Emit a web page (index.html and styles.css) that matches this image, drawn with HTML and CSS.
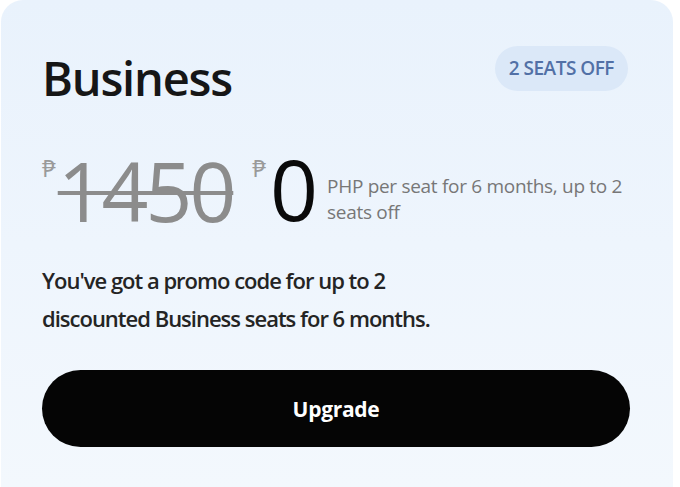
FILE: index.html
```html
<!DOCTYPE html>
<html>
<head>
<meta charset="utf-8">
<link rel="stylesheet" href="styles.css">
</head>
<body>
<div class="card">
  <div class="head">
    <h1 class="title">Business</h1>
    <span class="badge">2 SEATS OFF</span>
  </div>
  <div class="price">
    <span class="cur">₱</span><span class="old">1450</span>
    <span class="cur cur-new">₱</span><span class="new">0</span>
    <span class="note">PHP per seat for 6 months, up to 2 seats off</span>
  </div>
  <p class="desc">You've got a promo code for up to 2 discounted Business seats for 6 months.</p>
  <button class="btn">Upgrade</button>
</div>
</body>
</html>
```
FILE: styles.css
```css
html, body {
  margin: 0;
  padding: 0;
  background: #ffffff;
  height: 100%;
  overflow: hidden;
}
body {
  font-family: "Open Sans", "Noto Sans", sans-serif;
}
.card {
  box-sizing: border-box;
  width: 672px;
  height: 487px;
  margin-left: 1px;
  border-radius: 22px 22px 0 0;
  background: linear-gradient(180deg, #e9f2fc 0%, #eef5fd 50%, #f3f8fd 100%);
  padding: 46px 45px 0 41px;
}
.head {
  display: flex;
  justify-content: space-between;
  align-items: flex-start;
}
.title {
  margin: 4px 0 0 0;
  font-size: 47px;
  font-weight: 600;
  color: #161616;
  line-height: 56px;
  letter-spacing: -1.2px;
}
.badge {
  background: #dbe8f8;
  color: #5270a6;
  font-size: 19px;
  font-weight: 600;
  letter-spacing: -0.5px;
  padding: 0 14px;
  height: 45px;
  line-height: 45px;
  border-radius: 23px;
}
.price {
  display: flex;
  align-items: flex-start;
  margin-top: 50px;
  height: 80px;
}
.cur {
  font-size: 24px;
  line-height: 24px;
  color: #9a9a9a;
  margin-right: 2px;
}
.cur-new {
  margin-right: 4px;
}
.old {
  font-size: 82px;
  line-height: 80px;
  font-weight: 500;
  color: #8c8c8c;
  text-decoration: line-through;
  text-decoration-thickness: 4px;
  letter-spacing: -3px;
  margin-top: -6px;
  margin-right: 19px;
}
.new {
  font-size: 84px;
  line-height: 80px;
  font-weight: 500;
  color: #0a0a0a;
  margin-top: -7px;
  margin-right: 9px;
}
.note {
  font-size: 19px;
  line-height: 26px;
  color: #777777;
  width: 310px;
  margin-top: 17px;
  letter-spacing: -0.3px;
}
.desc {
  margin: 25px 0 0 0;
  font-size: 22px;
  line-height: 38px;
  font-weight: 600;
  color: #242424;
  width: 435px;
  letter-spacing: -1px;
}
.btn {
  display: block;
  margin-top: 33px;
  width: 588px;
  height: 77px;
  border: none;
  border-radius: 39px;
  background: #050505;
  color: #fff;
  font-family: "Open Sans", "Noto Sans", sans-serif;
  font-size: 21px;
  font-weight: 700;
  letter-spacing: -0.3px;
}
```
